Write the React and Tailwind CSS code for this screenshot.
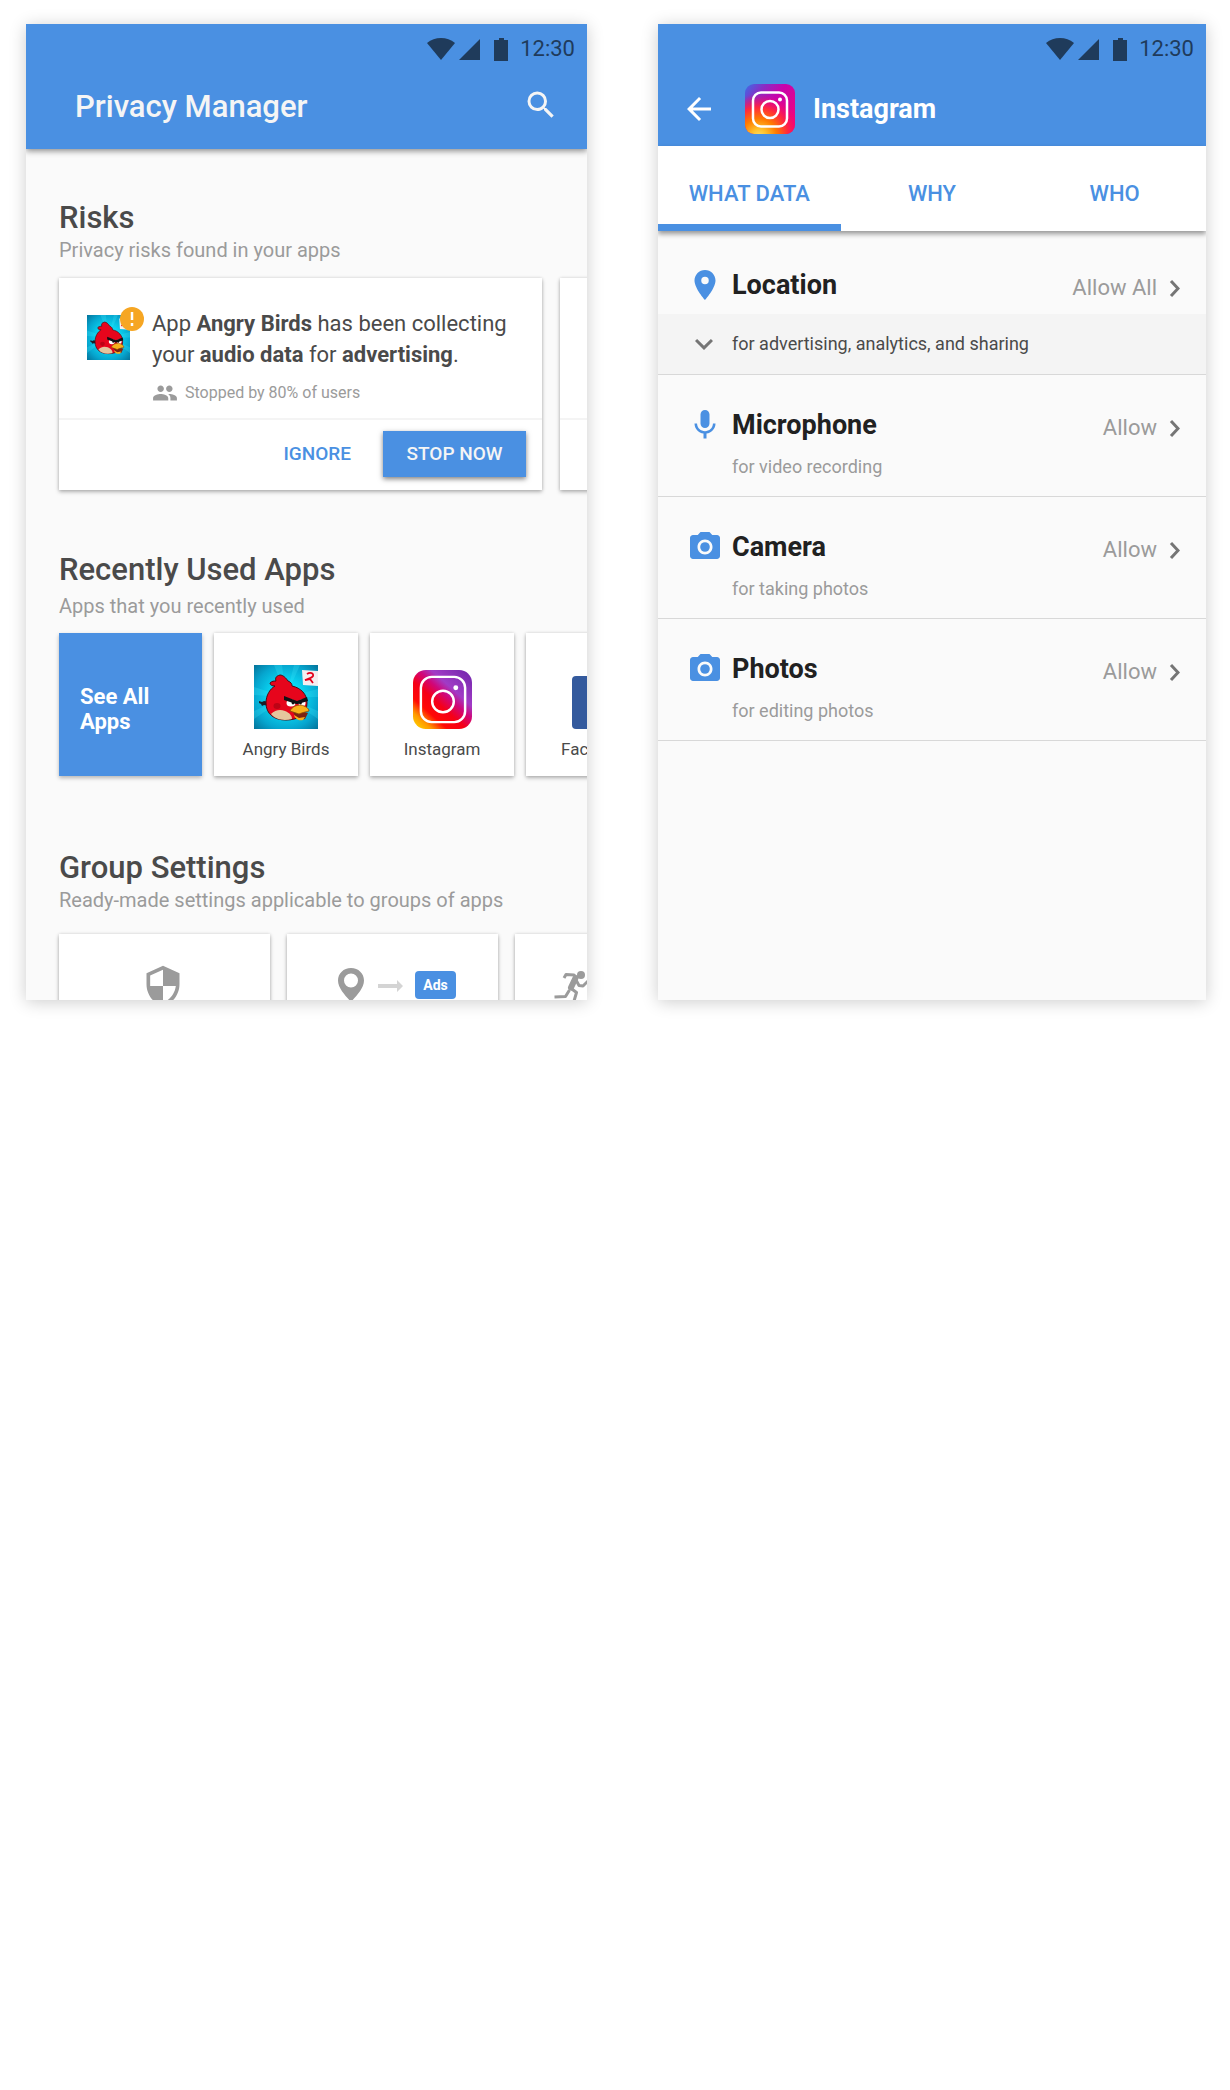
import React from "react";
import {
  MdArrowBack,
  MdExpandMore,
  MdGroup,
  MdLocationOn,
  MdMic,
  MdPhotoCamera,
  MdSearch,
  MdSecurity,
} from "react-icons/md";

const CARD = "shrink-0 bg-white shadow-[0_2px_4px_rgba(0,0,0,0.28),0_0_3px_rgba(0,0,0,0.12)]";

function StatusBar() {
  return (
    <div className="flex h-[50px] items-center justify-end pr-3 text-[#1f3b5b]">
      <svg aria-hidden="true" width="28" height="22" viewBox="0 0 28 22" className="fill-current">
        <path d="M0 5C4 1.700 8.800 0 14 0s10 1.700 14 5L14 22z" />
      </svg>
      <svg aria-hidden="true" width="21" height="22" viewBox="0 0 21 22" className="ml-1 fill-current">
        <path d="M21 1v21H0z" />
      </svg>
      <svg aria-hidden="true" width="14" height="23" viewBox="0 0 14 23" className="ml-3.5 fill-current">
        <path d="M5 0h5v2h4v21H0V2h5z" />
      </svg>
      <span className="ml-3 text-[22px] leading-7">12:30</span>
    </div>
  );
}

function AngryBirdsIcon({ id, className }) {
  return (
    <svg aria-hidden="true" viewBox="0 0 64 64" preserveAspectRatio="none" className={className}>
      <defs>
        <radialGradient id={id} cx="0.5" cy="0.5" r="0.72">
          <stop offset="0.3" stopColor="#0adcf7" />
          <stop offset="0.7" stopColor="#06a6cf" />
          <stop offset="1" stopColor="#046f96" />
        </radialGradient>
      </defs>
      <path fill={`url(#${id})`} d="M0 0h64v64H0z" />
      <path
        fill="#3fe6fa"
        opacity="0.25"
        d="M32 32 20 0h8zM32 32 40 0h6zM32 32 64 24v8zM32 32 0 22v8zM32 32 0 46v8zM32 32 64 46v8z"
      />
      <path fill="#f4eef0" d="M48 5l16 1v15l-15-1z" />
      <path fill="none" stroke="#e2001a" strokeWidth="1.800" d="M53 9c3-2 7-1 6 2-1 2-5 3-8 4l5-1 3 4" />
      <path fill="#1b1e26" d="m5 36 3 1 2-1 5 1v4l-5-1-2 1-1-2-2-1z" />
      <path
        fill="#e6051c"
        stroke="#4b0a10"
        strokeWidth="1"
        d="M21 21c-3 0-5-1-5-3 2-2 4-2 6-2-1-3 0-5 4-6 3 0 6 3 8 6 3 1 4 3 4 5 9 2 15 8 15 17 0 11-8 17-21 17-12 0-20-6-20-17 0-8 4-14 9-17z"
      />
      <path fill="#e5c59d" d="M17 49c4-4 9-5 14-3 5 2 7 5 7 8-8 2-16 1-21-5z" />
      <ellipse cx="23" cy="41" rx="3.500" ry="3" fill="#a90312" opacity="0.7" />
      <ellipse cx="37" cy="38" rx="4.500" ry="3.500" fill="#fff" />
      <ellipse cx="48" cy="38" rx="3.500" ry="3.500" fill="#fff" />
      <circle cx="39" cy="38" r="1.400" fill="#111" />
      <circle cx="46.500" cy="38" r="1.400" fill="#111" />
      <path fill="#101014" d="m30 31 13 5 10-4 1 4-10 3h-2l-12-4z" />
      <path fill="#7c2313" d="m39 47 8-1 7 2-3 6c-5 1-10-2-12-7z" />
      <path fill="#f8b11b" stroke="#8a4a08" strokeWidth="0.800" d="M36 46c2-4 6-6 11-6 4 1 8 3 8 6-4 1-8 2-10 3-3-1-6-2-9-3z" />
      <path fill="#f8b11b" d="m40 50 5 3 6-1-2 3c-4 1-8-1-9-5z" />
    </svg>
  );
}

function InstagramTileIcon() {
  return (
    <svg aria-hidden="true" width="59" height="59" viewBox="0 0 60 60">
      <defs>
        <linearGradient id="tile-ig" x1="0.050" y1="1" x2="0.900" y2="0.050">
          <stop offset="0" stopColor="#ffd600" />
          <stop offset="0.140" stopColor="#ff9a00" />
          <stop offset="0.280" stopColor="#ff0a05" />
          <stop offset="0.450" stopColor="#f50018" />
          <stop offset="0.600" stopColor="#d0077a" />
          <stop offset="0.720" stopColor="#a13bc6" />
          <stop offset="1" stopColor="#7a2ab0" />
        </linearGradient>
      </defs>
      <rect width="60" height="60" rx="13" fill="url(#tile-ig)" />
      <rect x="8" y="7" width="45" height="46" rx="11" fill="none" stroke="#fff" strokeWidth="2.500" />
      <circle cx="30.500" cy="32" r="11" fill="none" stroke="#fff" strokeWidth="2.500" />
      <circle cx="43.500" cy="18" r="2.500" fill="#fff" />
    </svg>
  );
}

function InstagramHeaderIcon() {
  return (
    <svg aria-hidden="true" width="50" height="50" viewBox="0 0 50 50">
      <defs>
        <linearGradient id="head-ig" x1="0.100" y1="0" x2="1" y2="0.700">
          <stop offset="0" stopColor="#4c5fe0" />
          <stop offset="0.220" stopColor="#8a2cc4" />
          <stop offset="0.500" stopColor="#c803ab" />
          <stop offset="1" stopColor="#f0047f" />
        </linearGradient>
        <radialGradient id="head-ig-warm" cx="0.280" cy="1.050" r="0.850">
          <stop offset="0" stopColor="#ffdd66" />
          <stop offset="0.180" stopColor="#ffc02a" />
          <stop offset="0.420" stopColor="#ff7a00" />
          <stop offset="0.680" stopColor="#ff2a3c" />
          <stop offset="1" stopColor="#ff0069" stopOpacity="0" />
        </radialGradient>
      </defs>
      <rect width="50" height="50" rx="9" fill="url(#head-ig)" />
      <rect width="50" height="50" rx="9" fill="url(#head-ig-warm)" />
      <rect x="8" y="8.500" width="34" height="34" rx="8" fill="none" stroke="#fff" strokeWidth="2.500" />
      <circle cx="25" cy="25.500" r="8.500" fill="none" stroke="#fff" strokeWidth="2.500" />
      <circle cx="35" cy="15.500" r="2" fill="#fff" />
    </svg>
  );
}

function RunnerIcon() {
  return (
    <svg aria-hidden="true" width="37" height="35" viewBox="0 0 37 35">
      <circle cx="27" cy="4" r="4" fill="#9b9b9b" />
      <g fill="none" stroke="#9b9b9b" strokeWidth="3" strokeLinejoin="round">
        <path d="M10 7l2-3.500 8 .5 3.500 4" />
        <path d="M22 9l3 5.500 4 .5 5.500-5.500" />
        <path d="M16.500 17l6 4.500-3.500 12" />
        <path d="M15.500 19l-4 6.500L.5 26" />
      </g>
      <path d="M21.500 7L17 16.500" stroke="#9b9b9b" strokeWidth="6" strokeLinecap="round" />
    </svg>
  );
}

function Chevron() {
  return (
    <svg aria-hidden="true" width="11" height="19" viewBox="0 0 11 19">
      <path d="m2 2 7 7.500L2 17" fill="none" stroke="#757575" strokeWidth="3" />
    </svg>
  );
}

function SectionTitle({ title, note, gap = "" }) {
  return (
    <div className="pl-[33px]">
      <h2 className="text-[31px] font-medium leading-9 text-[#4a4a4a]">{title}</h2>
      <p className={`text-xl leading-7 text-[#9b9b9b] ${gap}`}>{note}</p>
    </div>
  );
}

function AppCard({ name, children }) {
  return (
    <button type="button" className={`flex h-[143px] w-36 flex-col items-center justify-end pb-[15px] ${CARD}`}>
      {children}
      <span className="mt-2 text-[17px] leading-6 text-[#4a4a4a]">{name}</span>
    </button>
  );
}

function PrivacyManager() {
  return (
    <section className="overflow-hidden bg-[#fafafa] shadow-[0_2px_16px_rgba(0,0,0,0.2)]">
      <header className="bg-[#4a90e2] pb-[9px] shadow-[0_2px_6px_rgba(0,0,0,0.45)]">
        <StatusBar />
        <div className="flex h-[66px] items-center justify-between pl-[49px] pr-7">
          <h1 className="text-[31px] font-medium leading-9 text-[#f5f5f5]">Privacy Manager</h1>
          <button type="button" aria-label="Search" className="pb-1 text-[#f5f5f5]">
            <MdSearch size={36} />
          </button>
        </div>
      </header>

      <div className="pt-[51px]">
        <SectionTitle title="Risks" note="Privacy risks found in your apps" />
        <div className="mt-3.5 flex gap-[18px] pl-[33px]">
          <article className={`w-[483px] ${CARD}`}>
            <div className="flex border-b-2 border-[#f4f4f4] pb-3 pl-7 pt-[30px]">
              <div className="relative mt-[7px] h-[45px] w-[43px]">
                <AngryBirdsIcon id="ab-small" className="h-full w-full" />
                <svg aria-hidden="true" width="24" height="24" viewBox="0 0 24 24" className="absolute -right-3.5 -top-2">
                  <circle cx="12" cy="12" r="12" fill="#f6a623" />
                  <path d="M12 5v8M12 16v3" stroke="#fff" strokeWidth="2.500" />
                </svg>
              </div>
              <div className="ml-[22px]">
                <p className="text-[22px] leading-[31px] text-[#4a4a4a]">
                  App <b>Angry Birds</b> has been collecting
                  <br />
                  your <b>audio data</b> for <b>advertising</b>.
                </p>
                <p className="mt-2.5 flex items-center gap-[7px] text-base leading-6 text-[#9b9b9b]">
                  <MdGroup size={26} aria-hidden="true" />
                  Stopped by 80% of users
                </p>
              </div>
            </div>
            <div className="flex items-center justify-end gap-8 pb-[13px] pr-4 pt-[11px]">
              <button type="button" className="text-[19px] font-medium text-[#4a90e2]">
                IGNORE
              </button>
              <button
                type="button"
                className="h-[46px] w-[143px] bg-[#4a90e2] text-[19px] font-medium text-[#f5f5f5] shadow-[0_2px_5px_rgba(0,0,0,0.5)]"
              >
                STOP NOW
              </button>
            </div>
          </article>
          <article className={`w-[483px] ${CARD}`}>
            <div className="h-[142px] border-b-2 border-[#f4f4f4]" />
          </article>
        </div>

        <div className="pt-[62px]">
          <SectionTitle title="Recently Used Apps" note="Apps that you recently used" gap="mt-1" />
          <div className="mt-[13px] flex gap-3 pl-[33px]">
            <button
              type="button"
              className="flex h-[143px] w-[143px] shrink-0 items-end bg-[#4a90e2] pb-[42px] pl-[21px] text-left text-[22px] font-bold leading-[25px] text-white shadow-[0_2px_4px_rgba(0,0,0,0.28)]"
            >
              See All
              <br />
              Apps
            </button>
            <AppCard name="Angry Birds">
              <AngryBirdsIcon id="ab-tile" className="h-16 w-16" />
            </AppCard>
            <AppCard name="Instagram">
              <InstagramTileIcon />
            </AppCard>
            <AppCard name="Facebook">
              <svg aria-hidden="true" width="53" height="53" viewBox="0 0 53 53">
                <rect width="53" height="53" rx="4" fill="#345a9d" />
                <path fill="#fff" d="M36 53V33h7l1-8h-8v-5c0-2 1-4 4-4h4V9h-6c-7 0-10 4-10 10v6h-7v8h7v20z" />
              </svg>
            </AppCard>
          </div>
        </div>

        <div className="pt-[74px]">
          <SectionTitle title="Group Settings" note="Ready-made settings applicable to groups of apps" />
          <div className="mt-5 flex h-[66px] gap-[17px] pl-[33px]">
            <div className={`flex h-40 w-[211px] justify-center pr-1 pt-[30px] text-[#9b9b9b] ${CARD}`}>
              <MdSecurity size={44} aria-hidden="true" />
            </div>
            <div className={`flex h-40 w-[211px] items-start pl-[51px] pt-[34px] ${CARD}`}>
              <svg aria-hidden="true" width="26" height="36" viewBox="0 0 26 36">
                <path
                  fill="#9b9b9b"
                  fillRule="evenodd"
                  d="M13 0C5.500 0 0 5.500 0 12.500 0 21 9 29 13 34c4-5 13-13 13-21.500C26 5.500 20.500 0 13 0zm0 5.500a7 7 0 1 1 0 14 7 7 0 0 1 0-14z"
                />
              </svg>
              <svg aria-hidden="true" width="26" height="12" viewBox="0 0 26 12" className="ml-3.5 mt-3">
                <path fill="#d4d4d4" d="M0 4h19V0l6 6-6 6V8H0z" />
              </svg>
              <span className="ml-[11px] mt-[3px] h-7 w-[41px] rounded bg-[#4a90e2] text-center text-sm font-bold leading-7 text-white">
                Ads
              </span>
            </div>
            <div className={`flex h-40 w-[211px] items-start pl-[39px] pt-[37px] ${CARD}`}>
              <RunnerIcon />
            </div>
          </div>
        </div>
      </div>
    </section>
  );
}

function Permission({ icon: Icon, name, access, note }) {
  return (
    <li className="border-b border-[#d8d8d8]">
      <div className={note ? "flex items-center pl-[29px] pr-[26px] pt-8" : "flex items-center pb-[11px] pl-[29px] pr-[26px] pt-9"}>
        <Icon size={36} aria-hidden="true" className="text-[#4a90e2]" />
        <h2 className="ml-[9px] text-[27px] font-bold leading-9 text-[#212121]">{name}</h2>
        <button type="button" className="ml-auto flex items-center gap-3 pt-1.5 text-[22px] leading-[30px] text-[#9b9b9b]">
          {access}
          <Chevron />
        </button>
      </div>
      {note ? (
        <p className="mt-3 pb-[17px] pl-[74px] text-lg leading-6 text-[#9b9b9b]">{note}</p>
      ) : (
        <button
          type="button"
          aria-expanded="false"
          className="flex h-[60px] w-full items-center bg-[#f4f4f4] pl-7 text-lg text-[#4a4a4a]"
        >
          <MdExpandMore size={36} aria-hidden="true" className="text-[#757575]" />
          <span className="ml-2.5">for advertising, analytics, and sharing</span>
        </button>
      )}
    </li>
  );
}

function AppDetail() {
  return (
    <section className="overflow-hidden bg-[#fafafa] shadow-[0_2px_16px_rgba(0,0,0,0.2)]">
      <header className="bg-[#4a90e2]">
        <StatusBar />
        <div className="flex h-[72px] items-center pb-0.5 pl-[23px]">
          <button type="button" aria-label="Back" className="text-white">
            <MdArrowBack size={36} />
          </button>
          <span className="ml-7">
            <InstagramHeaderIcon />
          </span>
          <h1 className="ml-[18px] text-[27px] font-bold leading-9 text-white">Instagram</h1>
        </div>
      </header>
      <nav className="grid h-[85px] grid-cols-3 bg-white text-[22px] font-medium text-[#4a90e2] shadow-[0_3px_5px_rgba(0,0,0,0.4)]">
        <button type="button" className="border-b-[7px] border-[#4a90e2] pt-[17px]">
          WHAT DATA
        </button>
        <button type="button" className="pt-2.5">
          WHY
        </button>
        <button type="button" className="pt-2.5">
          WHO
        </button>
      </nav>
      <ul>
        <Permission icon={MdLocationOn} name="Location" access="Allow All" />
        <Permission icon={MdMic} name="Microphone" access="Allow" note="for video recording" />
        <Permission icon={MdPhotoCamera} name="Camera" access="Allow" note="for taking photos" />
        <Permission icon={MdPhotoCamera} name="Photos" access="Allow" note="for editing photos" />
      </ul>
    </section>
  );
}

export default function App() {
  return (
    <main className="min-h-screen bg-white pb-6 pl-[26px] pr-6 pt-6 font-['Roboto',sans-serif]">
      <div className="grid grid-cols-[561fr_548fr] gap-[71px]">
        <PrivacyManager />
        <AppDetail />
      </div>
    </main>
  );
}
